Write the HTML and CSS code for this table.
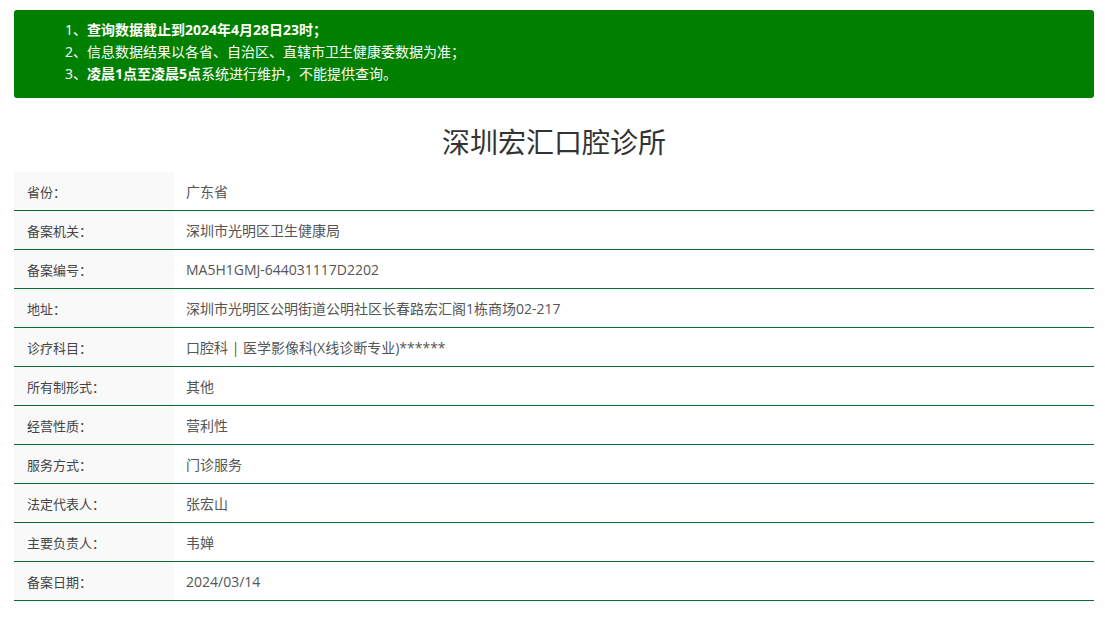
FILE: index.html
```html
<!DOCTYPE html>
<html lang="zh-CN">
<head>
<meta charset="utf-8">
<title>深圳宏汇口腔诊所</title>
<link rel="stylesheet" href="styles.css">
</head>
<body>
<div class="page">
  <div class="notice">
    <ol class="notice-list">
      <li><b>查询数据截止到2024年4月28日23时；</b></li>
      <li>信息数据结果以各省、自治区、直辖市卫生健康委数据为准；</li>
      <li><b>凌晨1点至凌晨5点</b>系统进行维护，不能提供查询。</li>
    </ol>
  </div>
  <h1 class="title">深圳宏汇口腔诊所</h1>
  <div class="info">
    <div class="row"><div class="label">省份：</div><div class="value">广东省</div></div>
    <div class="row"><div class="label">备案机关：</div><div class="value">深圳市光明区卫生健康局</div></div>
    <div class="row"><div class="label">备案编号：</div><div class="value">MA5H1GMJ-644031117D2202</div></div>
    <div class="row"><div class="label">地址：</div><div class="value">深圳市光明区公明街道公明社区长春路宏汇阁1栋商场02-217</div></div>
    <div class="row"><div class="label">诊疗科目：</div><div class="value">口腔科 | 医学影像科(X线诊断专业)******</div></div>
    <div class="row"><div class="label">所有制形式：</div><div class="value">其他</div></div>
    <div class="row"><div class="label">经营性质：</div><div class="value">营利性</div></div>
    <div class="row"><div class="label">服务方式：</div><div class="value">门诊服务</div></div>
    <div class="row"><div class="label">法定代表人：</div><div class="value">张宏山</div></div>
    <div class="row"><div class="label">主要负责人：</div><div class="value">韦婵</div></div>
    <div class="row"><div class="label">备案日期：</div><div class="value">2024/03/14</div></div>
  </div>
</div>
</body>
</html>
```
FILE: styles.css
```css
* { box-sizing: border-box; }
body {
  margin: 0;
  background: #fff;
  font-family: "Open Sans", "Noto Sans CJK SC", sans-serif;
  font-size: 13px;
  color: #555;
}
.page {
  padding: 10px 11px 0 14px;
}
.notice {
  background: #008000;
  border-radius: 3px;
  padding: 9px 20px 13px 33px;
  color: #fff;
}
.notice-list {
  margin: 0;
  padding: 0;
  list-style: none;
  counter-reset: n;
}
.notice-list li {
  counter-increment: n;
  line-height: 22px;
  padding-left: 18px;
  font-size: 14px;
}
.notice-list li::before {
  content: counter(n) "、";
}
.notice-list b { font-weight: 700; }
.title {
  margin: 0;
  padding: 22px 0 10px;
  text-align: center;
  font-family: "Noto Sans CJK SC", sans-serif;
  font-size: 28px;
  font-weight: 400;
  line-height: 42px;
  color: #333;
}
.info {
  display: flex;
  flex-direction: column;
}
.row {
  display: flex;
  height: 39px;
  border-bottom: 1px solid #0b6b34;
}
.label {
  flex: 0 0 160px;
  background: #f9f9f9;
  padding-left: 13px;
  display: flex;
  align-items: center;
  color: #444;
  font-size: 13px;
}
.value {
  flex: 1;
  padding-left: 12px;
  display: flex;
  align-items: center;
  color: #555;
  font-size: 14px;
}
```
